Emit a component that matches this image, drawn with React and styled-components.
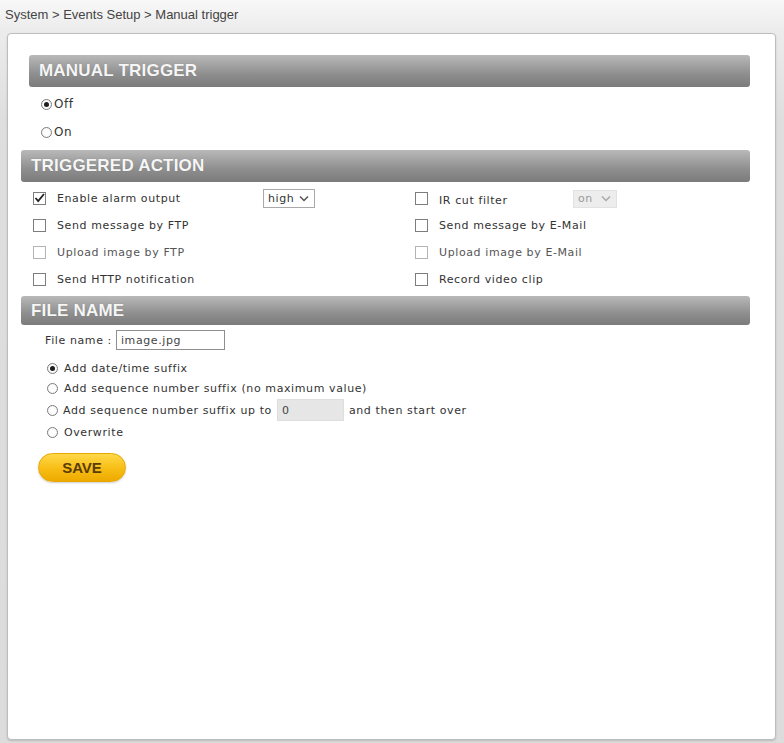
import React from 'react'
import styled, {createGlobalStyle} from 'styled-components'

const Global = createGlobalStyle`
  html, body {
    margin: 0;
    padding: 0;
  }
  body {
    font-family: "DejaVu Sans", Verdana, sans-serif;
    font-size: 11px;
    letter-spacing: 0.6px;
    color: #333;
    background: #e2e2e2;
  }
  * { box-sizing: border-box; }
`

const Page = styled.div`
  display: flex;
  flex-direction: column;
  min-height: 743px;
  padding: 0 8px 3px 0;
  background: linear-gradient(#f8f8f8 0, #ececec 30px, #dedede 120px, #dcdcdc 100%);
`

const Breadcrumb = styled.div`
  height: 33px;
  padding: 7px 0 0 5px;
  font-family: "Liberation Sans", Arial, sans-serif;
  font-size: 13px;
  letter-spacing: 0;
  color: #444;
`

const Panel = styled.div`
  flex: 1;
  margin-left: 7px;
  background: #fff;
  border: 1px solid #bdbdbd;
  border-radius: 4px;
  box-shadow: 0 1px 2px rgba(0, 0, 0, .15);
  padding: 21px 25px 0 13px;
`

const SectionBar = styled.div`
  height: ${p => p.$h || 32}px;
  margin-left: ${p => p.$indent || 0}px;
  padding-left: 10px;
  display: flex;
  align-items: center;
  border-radius: 3px;
  background: linear-gradient(#b9b9b9, #8e8e8e 60%, #7b7b7b);
  color: #f6f6f6;
  font-family: "Liberation Sans", Arial, sans-serif;
  font-weight: 700;
  font-size: 17px;
  letter-spacing: 0.2px;
  text-shadow: 0 0 1px rgba(0, 0, 0, .25);
`

const Body = styled.div`
  padding: ${p => p.$pad || '3px 0 4px'};
  padding-left: ${p => p.$left || 0}px;
`

const Row = styled.label`
  display: flex;
  align-items: center;
  height: ${p => p.$h || 28}px;
  gap: ${p => p.$gap ?? 2}px;
  font-size: ${p => p.$size || 11}px;
  color: #333;
`

const RadioDot = styled.span`
  flex: none;
  width: 11px;
  height: 11px;
  border-radius: 50%;
  border: 1px solid #7c7c7c;
  background: radial-gradient(circle, #fff 40%, #eee);
  display: flex;
  align-items: center;
  justify-content: center;
  &::after {
    content: '';
    width: 5px;
    height: 5px;
    border-radius: 50%;
    background: #1e1e1e;
    display: ${p => (p.$on ? 'block' : 'none')};
  }
`

const Grid = styled.div`
  display: grid;
  grid-template-columns: 382px 1fr;
  padding: 3px 0 3px 12px;
`

const CheckRow = styled.div`
  display: flex;
  align-items: center;
  height: 27px;
`

const Box = styled.span`
  flex: none;
  width: 13px;
  height: 13px;
  border: 1px solid ${p => (p.$faint ? '#b4b4b4' : '#7d7d7d')};
  background: #fff;
  display: flex;
  align-items: center;
  justify-content: center;
  margin-right: ${p => p.$gap || 11}px;
`

const CheckText = styled.span`
  width: ${p => (p.$w ? `${p.$w}px` : 'auto')};
  flex: none;
  color: ${p => (p.$faint ? '#555' : '#333')};
  padding-top: ${p => p.$drop || 0}px;
`

const Select = styled.span`
  display: inline-flex;
  align-items: center;
  justify-content: space-between;
  width: ${p => p.$w}px;
  height: ${p => p.$h || 19}px;
  padding: 0 5px 0 4px;
  border: 1px solid ${p => (p.$disabled ? '#e2e2e2' : '#a9a9a9')};
  background: ${p => (p.$disabled ? '#ededed' : '#fff')};
  color: ${p => (p.$disabled ? '#9a9a9a' : '#333')};
  font-size: 11px;
`

const Chevron = ({color}) => (
  <svg width="10" height="7" viewBox="0 0 10 7">
    <path d="M1 1.5 L5 5.5 L9 1.5" fill="none" stroke={color} strokeWidth="1.5" />
  </svg>
)

const Check = () => (
  <svg width="11" height="10" viewBox="0 0 11 10" style={{marginTop: -2}}>
    <path d="M1.5 5 L4.2 8 L10 1" fill="none" stroke="#222" strokeWidth="1.8" />
  </svg>
)

const Checkbox = ({checked, faint, label, w, drop, children}) => (
  <CheckRow>
    <Box $faint={faint}>{checked && <Check />}</Box>
    <CheckText $w={w} $faint={faint} $drop={drop}>{label}</CheckText>
    {children}
  </CheckRow>
)

const FileRow = styled.div`
  display: flex;
  align-items: center;
  gap: 4px;
  margin: 5px 0 0 24px;
  height: 20px;
`

const TextInput = styled.span`
  display: inline-flex;
  align-items: center;
  width: ${p => p.$w}px;
  height: ${p => p.$h || 20}px;
  padding-left: 4px;
  border: 1px solid ${p => (p.$gray ? '#dedede' : '#8f8f8f')};
  background: ${p => (p.$gray ? '#e6e6e6' : '#fff')};
  color: #444;
`

const RadioList = styled.div`
  display: flex;
  flex-direction: column;
  gap: 2px;
  margin: 9px 0 0 26px;
`

const SaveButton = styled.button`
  display: flex;
  align-items: center;
  justify-content: center;
  width: 88px;
  height: 29px;
  margin: 12px 0 0 17px;
  border: 1px solid #e6a800;
  border-radius: 15px;
  background: linear-gradient(#ffd84a, #f7bd14 55%, #eeaa00);
  box-shadow: 0 1px 2px rgba(0, 0, 0, .2);
  color: #5b3c06;
  font-family: "Liberation Sans", Arial, sans-serif;
  font-weight: 700;
  font-size: 15px;
  cursor: pointer;
`

export default function App() {
  return <Page>
    <Global />
    <Breadcrumb>System &gt; Events Setup &gt; Manual trigger</Breadcrumb>
    <Panel>
      <SectionBar $indent={8}>MANUAL TRIGGER</SectionBar>
      <Body $left={20}>
        <Row $size={12}><RadioDot $on />Off</Row>
        <Row $size={12}><RadioDot />On</Row>
      </Body>

      <SectionBar>TRIGGERED ACTION</SectionBar>
      <Grid>
        <Checkbox checked label="Enable alarm output" w={206}>
          <Select $w={52}>high <Chevron color="#555" /></Select>
        </Checkbox>
        <Checkbox label="IR cut filter" w={134} drop={3}>
          <Select $w={44} $h={18} $disabled>on <Chevron color="#aaa" /></Select>
        </Checkbox>
        <Checkbox label="Send message by FTP" />
        <Checkbox label="Send message by E-Mail" />
        <Checkbox faint label="Upload image by FTP" />
        <Checkbox faint label="Upload image by E-Mail" />
        <Checkbox label="Send HTTP notification" />
        <Checkbox label="Record video clip" />
      </Grid>

      <SectionBar $h={29}>FILE NAME</SectionBar>
      <FileRow>
        File name :
        <TextInput $w={109}>image.jpg</TextInput>
      </FileRow>
      <RadioList>
        <Row $h={18} $gap={6}><RadioDot $on />Add date/time suffix</Row>
        <Row $h={18} $gap={6}><RadioDot />Add sequence number suffix (no maximum value)</Row>
        <Row $h={22} $gap={5}>
          <RadioDot />Add sequence number suffix up to
          <TextInput $w={67} $h={22} $gray>0</TextInput>
          <span>and then start over</span>
        </Row>
        <Row $h={18} $gap={6}><RadioDot />Overwrite</Row>
      </RadioList>
      <SaveButton>SAVE</SaveButton>
    </Panel>
  </Page>
}
